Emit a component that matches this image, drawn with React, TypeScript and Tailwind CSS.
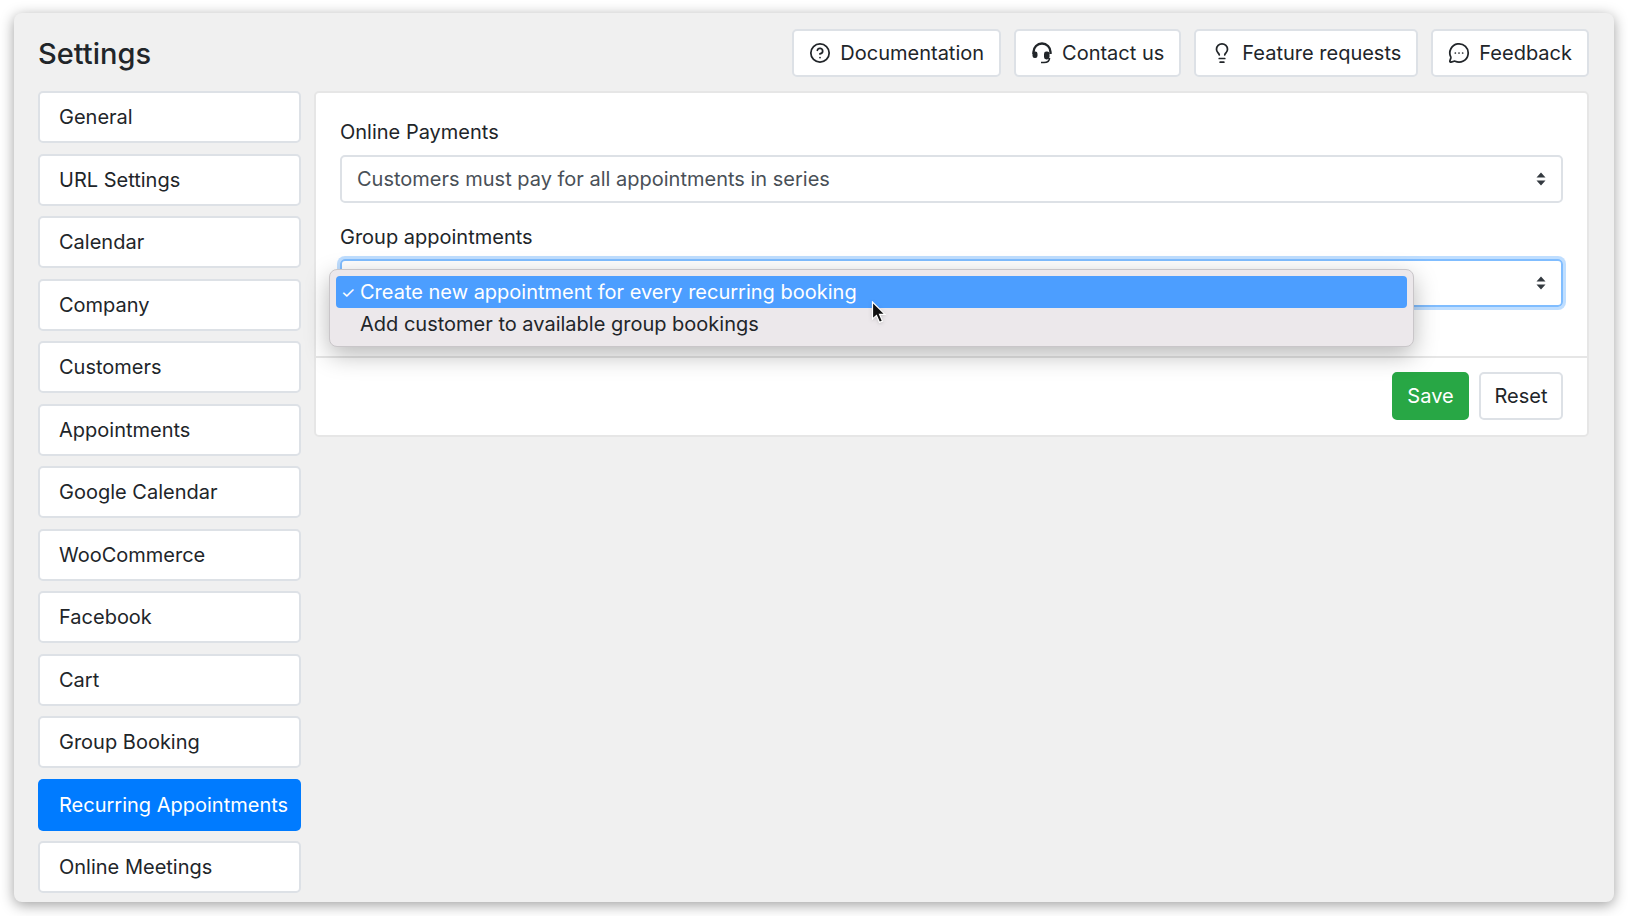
import { CircleHelp, Lightbulb, MessageCircleMore } from "lucide-react";

const sections = [
  "General",
  "URL Settings",
  "Calendar",
  "Company",
  "Customers",
  "Appointments",
  "Google Calendar",
  "WooCommerce",
  "Facebook",
  "Cart",
  "Group Booking",
  "Recurring Appointments",
  "Online Meetings",
];

function Headset() {
  return (
    <svg width="22" height="22" viewBox="0 0 22 22" fill="none" aria-hidden>
      <path d="M2.5 12V10a8.5 8.5 0 0 1 17 0v2" stroke="currentColor" strokeWidth="2.4" />
      <rect x="1.5" y="9.5" width="5" height="6.5" rx="2.2" fill="currentColor" />
      <rect x="13" y="9.5" width="5.5" height="8" rx="2.4" fill="currentColor" />
      <path d="M18.5 16c0 3-2.5 4.5-5.5 4.5H10" stroke="currentColor" strokeWidth="1.6" />
    </svg>
  );
}

function Updown() {
  return (
    <svg width="10" height="14" viewBox="0 0 10 14" className="text-[#343a40]" aria-hidden>
      <path d="M5 0.5 9.5 5.5H0.5Z M5 13.5 0.5 8.5H9.5Z" fill="currentColor" />
    </svg>
  );
}

function Cursor() {
  return (
    <svg
      width="16"
      height="24"
      viewBox="0 0 16 24"
      className="absolute left-[857px] top-[288px] drop-shadow"
      aria-hidden
    >
      <path d="M1.5 1v17l4-3.6 3 7 3-1.3-3-6.8h5.5Z" fill="#111" stroke="#fff" strokeWidth="1.2" />
    </svg>
  );
}

function HeaderButton({ icon, label, pad }: { icon: React.ReactNode; label: string; pad: string }) {
  return (
    <button className={`flex h-[48px] items-center gap-[9px] rounded-[5px] border-2 border-[#dde1e6] bg-white text-[#212529] ${pad}`}>
      {icon}
      {label}
    </button>
  );
}

export default function App() {
  return (
    <div className="h-[916px] w-[1628px] bg-white pl-[14px] pt-[13px] font-['Inter',sans-serif] text-[20px] text-[#212529]">
      <div className="relative flex h-[889px] w-[1600px] flex-col rounded-[8px] bg-[#f0f0f0] pl-[24px] pr-[25px] shadow-[0_3px_14px_rgba(0,0,0,0.38)]">
        <header className="flex h-[78px] shrink-0 items-center justify-between pt-[2px]">
          <h1 className="text-[29px] font-medium leading-none">Settings</h1>
          <div className="flex gap-[13px]">
            <HeaderButton pad="px-[15px]" icon={<CircleHelp size={22} strokeWidth={1.9} />} label="Documentation" />
            <HeaderButton pad="px-[15px]" icon={<Headset />} label="Contact us" />
            <HeaderButton pad="px-[15px]" icon={<Lightbulb size={22} strokeWidth={1.9} />} label="Feature requests" />
            <HeaderButton pad="px-[15px]" icon={<MessageCircleMore size={22} strokeWidth={1.9} />} label="Feedback" />
          </div>
        </header>

        <div className="flex gap-[13px]">
          <nav className="flex w-[263px] shrink-0 flex-col gap-[10.5px]">
            {sections.map((name) =>
              name === "Recurring Appointments" ? (
                <a key={name} className="flex h-[52px] items-center whitespace-nowrap rounded-[5px] bg-[#007bff] px-[21px] text-white">
                  {name}
                </a>
              ) : (
                <a key={name} className="flex h-[52px] items-center rounded-[5px] border-2 border-[#dde1e6] bg-white px-[19px]">
                  {name}
                </a>
              ),
            )}
          </nav>

          <main className="h-[346px] w-[1275px] rounded-[5px] border-2 border-[#e6e6e6] bg-white">
            <div className="h-[265px] border-b-2 border-[#e6e6e6] px-[24px] pt-[26px]">
              <label className="block leading-[26px]">Online Payments</label>
              <div className="mt-[10px] flex h-[48px] items-center justify-between rounded-[5px] border-2 border-[#dde1e6] pl-[15px] pr-[15px] text-[#495057]">
                Customers must pay for all appointments in series
                <Updown />
              </div>
              <label className="mt-[21px] block leading-[26px]">Group appointments</label>
              <div className="mt-[9px] flex h-[48px] items-center justify-end rounded-[5px] border-2 border-[#80bdff] pr-[15px] shadow-[0_0_0_3px_rgba(0,123,255,0.25)]">
                <Updown />
              </div>
            </div>
            <div className="flex justify-end gap-[10px] px-[24px] pt-[14px]">
              <button className="h-[48px] w-[77px] rounded-[5px] border-2 border-[#28a745] bg-[#28a745] text-white">Save</button>
              <button className="h-[48px] w-[84px] rounded-[5px] border-2 border-[#dde1e6] bg-white">Reset</button>
            </div>
          </main>
        </div>

        <div className="absolute left-[315px] top-[256px] h-[78px] w-[1085px] rounded-[8px] border border-[#c9c6c9] bg-[#ece8eb] p-[6px] shadow-[0_8px_24px_rgba(0,0,0,0.28)]">
          <div className="flex h-[32px] items-center rounded-[4px] bg-[#4c9eff] text-white">
            <span className="w-[24px] pl-[5px] text-[16px]">✓</span>
            Create new appointment for every recurring booking
          </div>
          <div className="flex h-[32px] items-center pl-[24px]">Add customer to available group bookings</div>
        </div>
        <Cursor />
      </div>
    </div>
  );
}
